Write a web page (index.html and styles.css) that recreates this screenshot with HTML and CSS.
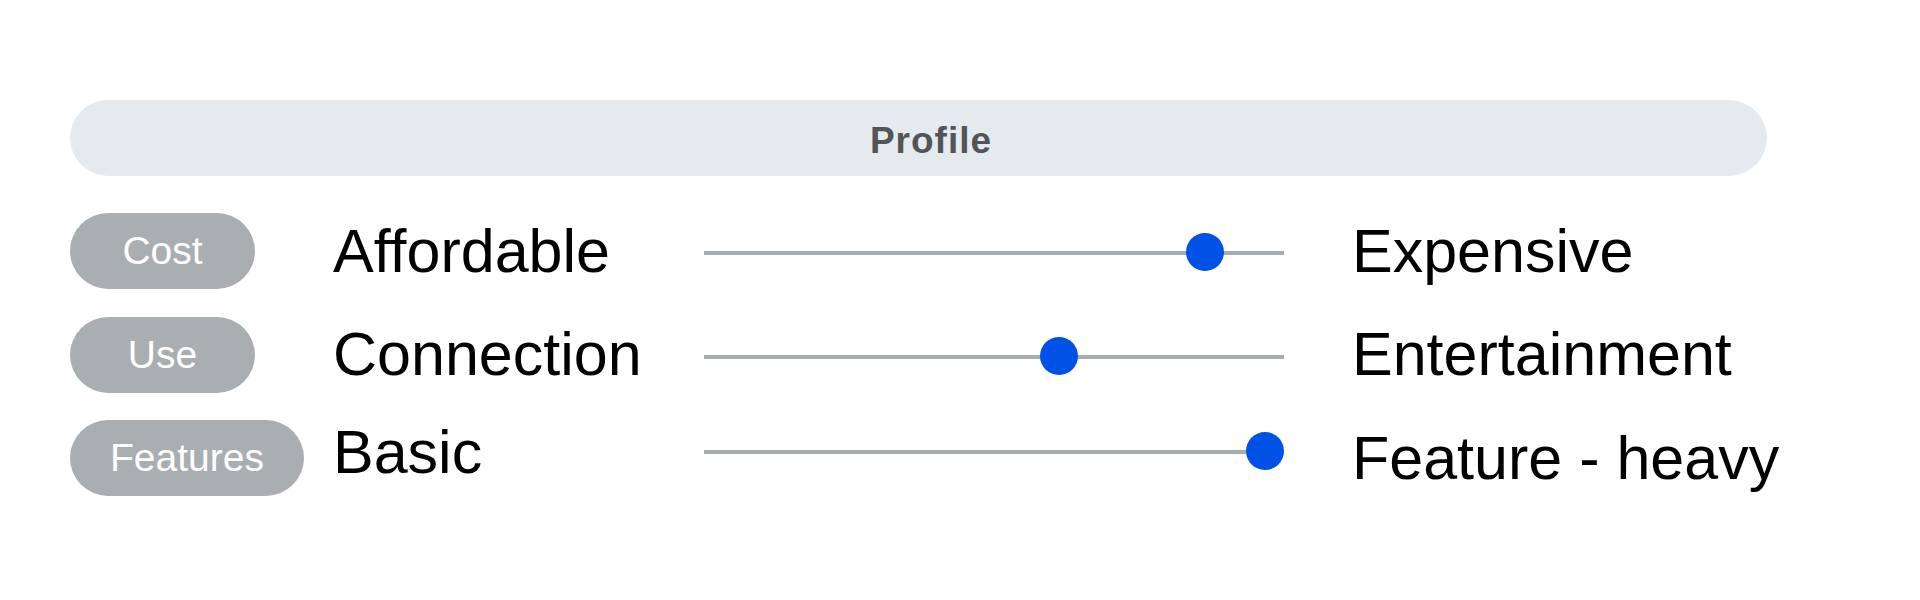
FILE: index.html
```html
<!DOCTYPE html>
<html lang="en">
<head>
<meta charset="UTF-8">
<meta name="viewport" content="width=device-width, initial-scale=1.0">
<title>Profile</title>
<link rel="stylesheet" href="styles.css">
</head>
<body>
<div class="profile">
  <div class="title">Profile</div>

  <div class="scales">
    <span class="tag">Cost</span>
    <span class="lo">Affordable</span>
    <input class="slider" type="range" min="0" max="100" value="89">
    <span class="hi">Expensive</span>

    <span class="tag">Use</span>
    <span class="lo">Connection</span>
    <input class="slider" type="range" min="0" max="100" value="62">
    <span class="hi">Entertainment</span>

    <span class="tag">Features</span>
    <span class="lo up">Basic</span>
    <input class="slider up" type="range" min="0" max="100" value="100">
    <span class="hi">Feature - heavy</span>
  </div>
</div>
</body>
</html>
```

FILE: styles.css
```css
  body {
    margin: 0;
    background: #fff;
    font-family: "Liberation Sans", Arial, sans-serif;
    color: #000;
  }
  .profile {
    padding: 100px 0 0 70px;
    width: 1697px;
  }
  .title {
    height: 76px;
    line-height: 82px;
    border-radius: 38px;
    background: #e5eaee;
    color: #515559;
    font-size: 37px;
    font-weight: bold;
    letter-spacing: 1px;
    text-align: center;
    padding-left: 25px;
  }
  .scales {
    display: grid;
    grid-template-columns: 263px 371px 580px auto;
    grid-auto-rows: 76px;
    row-gap: 27.5px;
    align-items: center;
    margin-top: 37px;
  }
  .tag {
    justify-self: start;
    box-sizing: border-box;
    min-width: 185px;
    height: 76px;
    line-height: 76px;
    padding: 0 40px;
    border-radius: 38px;
    background: #a9aeb1;
    color: #fff;
    font-size: 39px;
    text-align: center;
  }
  .lo, .hi {
    font-size: 61px;
    line-height: 1;
    white-space: nowrap;
  }
  .hi {
    padding-left: 68px;
  }

  .slider {
    -webkit-appearance: none;
    appearance: none;
    width: 580px;
    height: 38px;
    margin: 4px 0 0 0;
    padding: 0;
    background: transparent;
  }
  .slider::-webkit-slider-runnable-track {
    height: 4px;
    background: #a7acb0;
  }
  .slider::-webkit-slider-thumb {
    -webkit-appearance: none;
    width: 38px;
    height: 38px;
    margin-top: -18px;
    border-radius: 50%;
    background: #0051e6;
    border: none;
  }

  /* last row sits a little higher */
  .scales .up {
    margin: 0 0 12px 0;
  }
```
